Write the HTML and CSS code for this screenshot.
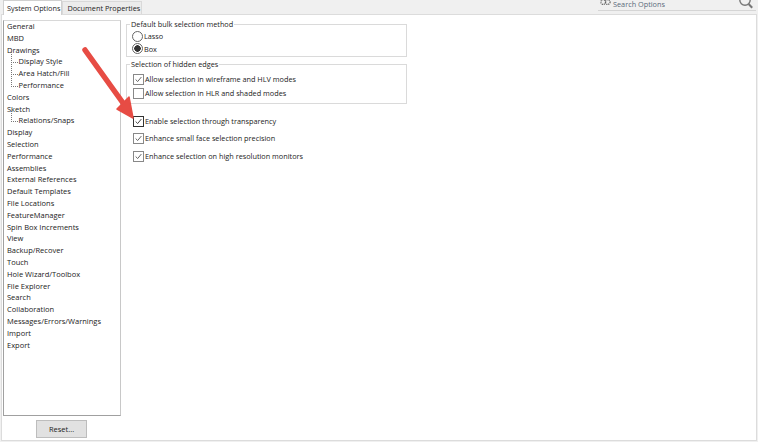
FILE: index.html
```html
<!DOCTYPE html>
<html lang="en">
<head>
<meta charset="utf-8">
<title>System Options</title>
<link rel="stylesheet" href="styles.css">
</head>
<body>
<div class="dialog">
  <header class="topbar">
    <nav class="tabs">
      <span class="tab active">System Options</span>
      <span class="tab">Document Properties</span>
    </nav>
    <div class="search">
      <svg class="gears" viewBox="0 0 12 10" width="11" height="9"><circle cx="3.5" cy="4.5" r="2.6" fill="none" stroke="#666" stroke-width="1.4" stroke-dasharray="1.2 .8"/><circle cx="8.5" cy="4.5" r="2.6" fill="none" stroke="#666" stroke-width="1.4" stroke-dasharray="1.2 .8"/></svg>
      <span class="search-text">Search Options</span>
      <svg class="lens" viewBox="0 0 16 12" width="16" height="12"><circle cx="7" cy="2" r="5.2" fill="none" stroke="#777" stroke-width="1.4"/><path d="M10.6 6l3.6 3.8" stroke="#777" stroke-width="2" fill="none"/></svg>
    </div>
  </header>
  <div class="body">
    <aside class="side">
      <ul class="tree">
        <li>General</li>
        <li>MBD</li>
        <li>Drawings</li>
        <li class="sub">Display Style</li>
        <li class="sub">Area Hatch/Fill</li>
        <li class="sub last">Performance</li>
        <li>Colors</li>
        <li>Sketch</li>
        <li class="sub only">Relations/Snaps</li>
        <li>Display</li>
        <li>Selection</li>
        <li>Performance</li>
        <li>Assemblies</li>
        <li>External References</li>
        <li>Default Templates</li>
        <li>File Locations</li>
        <li>FeatureManager</li>
        <li>Spin Box Increments</li>
        <li>View</li>
        <li>Backup/Recover</li>
        <li>Touch</li>
        <li>Hole Wizard/Toolbox</li>
        <li>File Explorer</li>
        <li>Search</li>
        <li>Collaboration</li>
        <li>Messages/Errors/Warnings</li>
        <li>Import</li>
        <li>Export</li>
      </ul>
      <button class="reset" type="button">Reset...</button>
    </aside>
    <main class="content">
      <fieldset class="group first">
        <legend>Default bulk selection method</legend>
        <label class="opt radio-row"><span class="radio"></span>Lasso</label>
        <label class="opt radio-row"><span class="radio on"></span>Box</label>
      </fieldset>
      <fieldset class="group second">
        <legend>Selection of hidden edges</legend>
        <label class="opt check-row"><span class="check on"><svg viewBox="0 0 11 11"><path d="M2 5.5l2.5 2.5 4.5-5.5" fill="none" stroke="#555" stroke-width="1.1"/></svg></span>Allow selection in wireframe and HLV modes</label>
        <label class="opt check-row"><span class="check"></span>Allow selection in HLR and shaded modes</label>
      </fieldset>
      <label class="opt free t1"><span class="check dark"><svg viewBox="0 0 11 11"><path d="M2 5.5l2.5 2.5 4.5-5.5" fill="none" stroke="#333" stroke-width="1.1"/></svg></span>Enable selection through transparency</label>
      <label class="opt free t2"><span class="check on"><svg viewBox="0 0 11 11"><path d="M2 5.5l2.5 2.5 4.5-5.5" fill="none" stroke="#555" stroke-width="1.1"/></svg></span>Enhance small face selection precision</label>
      <label class="opt free t3"><span class="check on"><svg viewBox="0 0 11 11"><path d="M2 5.5l2.5 2.5 4.5-5.5" fill="none" stroke="#555" stroke-width="1.1"/></svg></span>Enhance selection on high resolution monitors</label>
    </main>
  </div>
  <svg class="arrow" viewBox="0 0 70 85" width="70" height="85"><path d="M3 4L41 57" stroke="#e74c44" stroke-width="5.5" stroke-linecap="round" fill="none"/><path d="M51 72L35 63L47 51Z" fill="#e74c44" stroke="#e74c44" stroke-width="1.5" stroke-linejoin="round"/></svg>
</div>
</body>
</html>
```
FILE: styles.css
```css
* { box-sizing: border-box; }
html, body { margin: 0; height: 100%; background: #fff; }
.dialog {
  position: relative;
  width: 758px;
  height: 442px;
  overflow: hidden;
  background: #f0f0f0;
  font-family: "Open Sans", "Noto Sans", sans-serif;
  font-size: 7.3px;
  color: #222;
}
.topbar { display: flex; justify-content: space-between; height: 14px; }
.tabs { display: flex; padding-left: 3px; align-items: flex-start; }
.tab {
  height: 13px;
  margin-top: 1px;
  padding: 1px 1px 0 4px;
  line-height: 10px;
  background: #ececec;
  border: 1px solid #d9d9d9;
  border-bottom: 0;
  white-space: nowrap;
}
.tab.active { height: 15px; margin-top: 0; padding: 2px 1px 0 3px; background: #fff; border-color: #d0d0d0; position: relative; z-index: 1; }
.search { display: flex; align-items: flex-start; width: 158px; height: 11px; margin-right: 2px; border-bottom: 1px solid #d5d5d5; overflow: hidden; padding-left: 2px; }
.gears { margin-top: -2px; flex: none; }
.search-text { margin-left: 2px; color: #5a6a7a; line-height: 8px; margin-top: 0; flex: 1; }
.lens { margin-top: -2px; margin-right: 2px; flex: none; }
.body {
  display: flex;
  height: 427px;
  margin-left: 1px;
  margin-right: 1px;
  background: #fff;
  border: 1px solid #dcdcdc;
}
.side { width: 120px; flex: none; padding: 5px 0 0 1px; display: flex; flex-direction: column; align-items: flex-start; font-size: 7.5px; }
.tree {
  list-style: none;
  margin: 0;
  width: 118px;
  height: 396px;
  padding: 0 0 0 3px;
  border: 1px solid #a0a0a0;
  border-top-color: #d8d8d8;
  border-right-color: #c8c8c8;
  background: #fff;
}
.tree li { height: 11.8px; line-height: 11.8px; white-space: nowrap; }
.tree .sub { position: relative; padding-left: 11.5px; }
.tree .sub::before {
  content: "";
  position: absolute;
  left: 4px;
  top: -4px;
  width: 6px;
  height: 10px;
  border-left: 1px dotted #777;
  border-bottom: 1px dotted #777;
}
.reset {
  width: 51px;
  height: 18px;
  margin-top: 4px;
  margin-left: 33px;
  padding: 0;
  font: inherit;
  color: #222;
  background: #e1e1e1;
  border: 1px solid #bdbdbd;
}
.content { flex: 1; padding: 5px 0 0 4px; display: flex; flex-direction: column; align-items: flex-start; }
.group {
  margin: 0;
  width: 281px;
  padding: 0 0 0 5px;
  border: 1px solid #dadada;
}
.group legend { padding: 0 1px; margin-left: -2px; line-height: 9px; }
.first { height: 37px; }
.second { height: 44px; margin-top: 3px; }
.opt { display: flex; align-items: center; white-space: nowrap; }
.radio-row { height: 12.5px; }
.radio-row:first-of-type { margin-top: 1px; }
.check-row { height: 14px; margin-left: 1px; }
.check-row:first-of-type { margin-top: 3px; }
.radio { width: 11px; height: 11px; margin-right: 1px; border: 1px solid #666; border-radius: 50%; background: #fff; flex: none; }
.radio.on { background: radial-gradient(circle, #333 0 3px, #fff 3.5px); }
.check { width: 11px; height: 11px; margin-right: 1px; border: 1px solid #888; background: #fff; flex: none; display: block; }
.check.dark { border-color: #333; }
.check svg { display: block; width: 100%; height: 100%; }
.free { margin-left: 7px; height: 12px; }
.t1 { margin-top: 11px; }
.t2 { margin-top: 5px; }
.t3 { margin-top: 6px; }
.arrow { position: absolute; left: 82px; top: 46px; }
```
